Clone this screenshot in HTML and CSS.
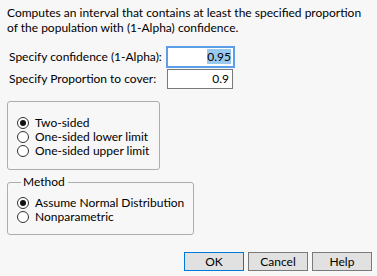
FILE: index.html
```html
<!DOCTYPE html>
<html>
<head>
<meta charset="utf-8">
<link rel="stylesheet" href="styles.css">
</head>
<body>
<div class="dialog">
  <p class="desc"><span class="line">Computes an interval that contains at least the specified proportion</span> <span class="line">of the population with (1-Alpha) confidence.</span></p>
  <div class="fields">
    <div class="row">
      <span class="label">Specify confidence (1-Alpha):</span>
      <span class="input focused"><span class="sel">0.95</span></span>
    </div>
    <div class="row">
      <span class="label">Specify Proportion to cover:</span>
      <span class="input">0.9</span>
    </div>
  </div>
  <div class="group sides">
    <div class="opt"><span class="radio checked"></span>Two-sided</div>
    <div class="opt"><span class="radio"></span>One-sided lower limit</div>
    <div class="opt"><span class="radio"></span>One-sided upper limit</div>
  </div>
  <fieldset class="group method">
    <legend>Method</legend>
    <div class="opt"><span class="radio checked"></span>Assume Normal Distribution</div>
    <div class="opt"><span class="radio"></span>Nonparametric</div>
  </fieldset>
  <div class="buttons">
    <span class="btn default">OK</span>
    <span class="btn">Cancel</span>
    <span class="btn">Help</span>
  </div>
</div>
</body>
</html>
```
FILE: styles.css
```css
html, body {
  margin: 0;
  padding: 0;
  background: #f7f7f7;
}
body {
  font-family: Lato, "Liberation Sans", sans-serif;
  font-size: 12px;
  line-height: 14px;
  color: #000;
}
.dialog {
  width: 377px;
  height: 276px;
  padding: 5px 0 0 7px;
  box-sizing: border-box;
  display: flex;
  flex-direction: column;
}
.desc {
  margin: 0;
  line-height: 15px;
}
.line {
  display: block;
  white-space: nowrap;
}
.fields {
  margin-top: 12px;
  display: flex;
  flex-direction: column;
  gap: 2px;
  padding-left: 2px;
}
.row {
  display: flex;
  align-items: center;
  height: 20px;
  white-space: nowrap;
}
.label {
  width: 158px;
}
.input {
  box-sizing: border-box;
  width: 66px;
  height: 20px;
  border: 1px solid #7a7a7a;
  background: #fff;
  text-align: right;
  padding-right: 3px;
  line-height: 18px;
}
.input.focused {
  width: 69px;
  height: 22px;
  margin-left: -1px;
  border: 2px solid #5c9ee8;
  line-height: 18px;
  padding-right: 2px;
}
.sel {
  background: #99c9ef;
}
.group {
  margin: 0;
  box-sizing: border-box;
  border: 1px solid #adadad;
  border-radius: 3px;
  background: #f7f7f7;
}
.sides {
  margin-top: 12px;
  width: 153px;
  height: 69px;
  padding: 14px 0 0 9px;
}
.opt {
  display: flex;
  align-items: center;
  height: 14px;
  line-height: 14px;
  white-space: nowrap;
}
.radio {
  box-sizing: border-box;
  width: 12px;
  height: 12px;
  border: 1px solid #333;
  border-radius: 50%;
  background: #fff;
  margin-right: 6px;
  display: flex;
  align-items: center;
  justify-content: center;
}
.radio.checked::after {
  content: "";
  width: 6px;
  height: 6px;
  border-radius: 50%;
  background: #111;
}
.method {
  margin-top: 5px;
  width: 187px;
  height: 60px;
  padding: 7px 0 0 9px;
  min-width: 0;
}
.method legend {
  padding: 0 3px 0 2px;
  margin-left: 4px;
  line-height: 14px;
}
.buttons {
  margin-top: auto;
  margin-bottom: 5px;
  align-self: flex-end;
  margin-right: 5px;
  display: flex;
  gap: 4px;
}
.btn {
  box-sizing: border-box;
  width: 60px;
  height: 19px;
  border: 1px solid #7a7a7a;
  background: #e1e1e1;
  text-align: center;
  line-height: 17px;
}
.btn.default {
  border-color: #0078d7;
}
```
